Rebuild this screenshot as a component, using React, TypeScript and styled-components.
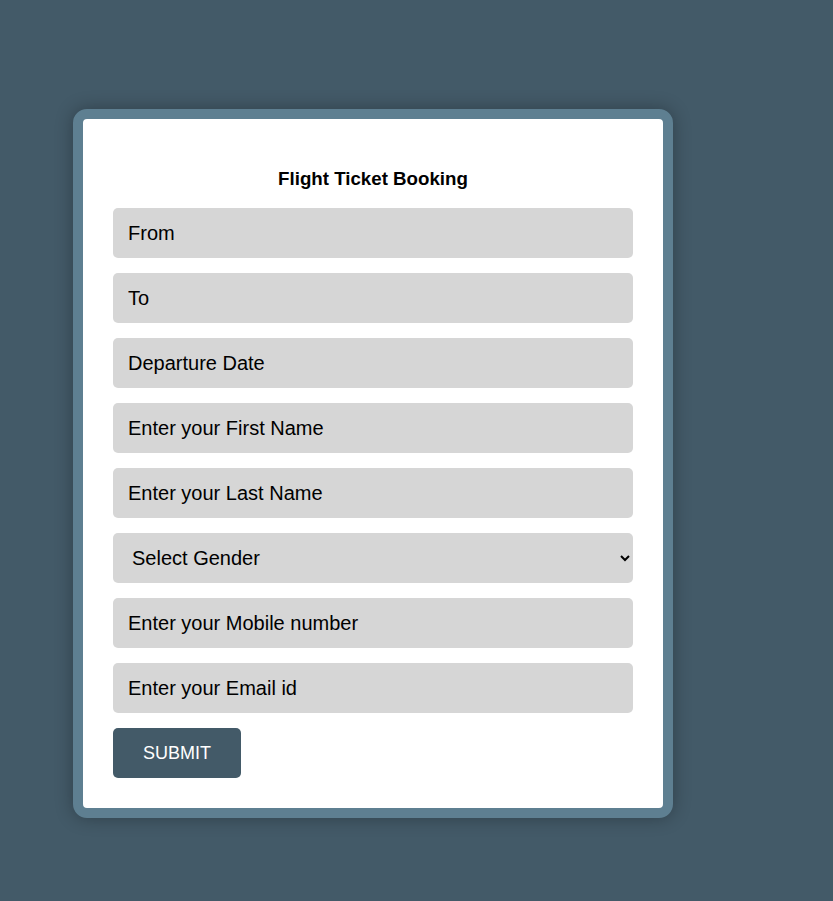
import React from "react";
import styled, { createGlobalStyle } from "styled-components";

const Global = createGlobalStyle`
  html, body { margin: 0; padding: 0; background: #435a68; min-height: 100%; }
  body { font-family: "Liberation Sans", Arial, sans-serif; }
`;

const Page = styled.div`
  min-height: 901px;
  box-sizing: border-box;
  padding: 109px 0 0 73px;
`;

const Card = styled.form`
  width: 600px;
  box-sizing: border-box;
  background: #ffffff;
  border: 10px solid #5e7f91;
  border-radius: 14px;
  padding: 30px;
  box-shadow: 0 0 18px rgba(0, 0, 0, 0.3);
  display: flex;
  flex-direction: column;
`;

const Title = styled.h3`
  margin: 18.72px 0;
  font-size: 18.72px;
  font-weight: bold;
  text-align: center;
  color: #000;
`;

const Fields = styled.div`
  display: flex;
  flex-direction: column;
  gap: 15px;
`;

const Field = styled.input`
  height: 50px;
  box-sizing: border-box;
  border: none;
  border-radius: 5px;
  background: #d6d6d6;
  padding: 0 15px;
  font-family: "Liberation Sans", Arial, sans-serif;
  font-size: 20px;
  color: #000;
  outline: none;
  &::placeholder { color: #000; opacity: 1; }
`;

const Select = styled.select`
  height: 50px;
  box-sizing: border-box;
  border: none;
  border-radius: 5px;
  background: #d6d6d6;
  padding: 0 15px;
  font-family: "Liberation Sans", Arial, sans-serif;
  font-size: 20px;
  color: #000;
  outline: none;
`;

const Submit = styled.button`
  align-self: flex-start;
  width: 128px;
  height: 50px;
  border: none;
  border-radius: 5px;
  background: #435a68;
  color: #ffffff;
  font-family: "Liberation Sans", Arial, sans-serif;
  font-size: 18px;
  text-transform: uppercase;
  cursor: pointer;
`;

export default function App() {
  return (
    <>
      <Global />
      <Page>
        <Card onSubmit={(e) => e.preventDefault()}>
          <Title>Flight Ticket Booking</Title>
          <Fields>
            <Field placeholder="From" />
            <Field placeholder="To" />
            <Field placeholder="Departure Date" />
            <Field placeholder="Enter your First Name" />
            <Field placeholder="Enter your Last Name" />
            <Select defaultValue="">
              <option value="">Select Gender</option>
              <option value="male">Male</option>
              <option value="female">Female</option>
            </Select>
            <Field placeholder="Enter your Mobile number" />
            <Field placeholder="Enter your Email id" />
            <Submit type="submit">Submit</Submit>
          </Fields>
        </Card>
      </Page>
    </>
  );
}
